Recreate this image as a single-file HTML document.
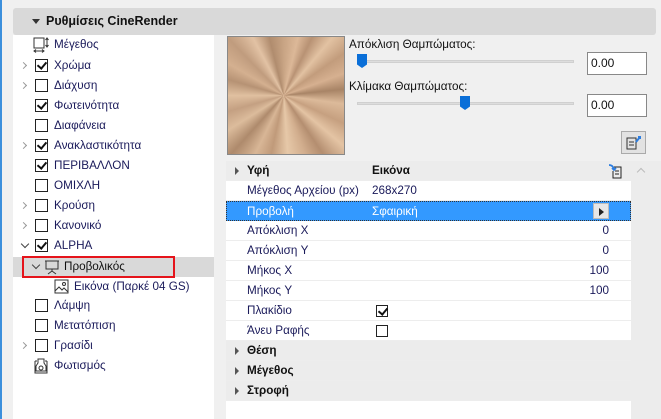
<!DOCTYPE html>
<html><head><meta charset="utf-8"><style>
*{box-sizing:border-box;margin:0;padding:0}
body{width:661px;height:419px;background:#f0f0f0;font-family:"Liberation Sans","DejaVu Sans",sans-serif;font-size:11.7px;color:#1a1a5a;position:relative;overflow:hidden}
.abs{position:absolute}
.hdr{left:13px;top:8px;width:643px;height:27px;background:#d9d9d9;border-radius:3px;font-weight:bold;color:#111;font-size:12.5px;line-height:27px;padding-left:33px}
.hdr:before{content:"";position:absolute;left:19px;top:11px;border-left:4px solid transparent;border-right:4px solid transparent;border-top:5px solid #333}
.left{left:13px;top:35px;width:201px;height:384px;background:#fff}
.row{position:absolute;left:0;width:201px;height:20px;line-height:20px}
.cb{position:absolute;left:22px;top:3px;width:13px;height:13px;border:1px solid #222;background:#fff}
.cb.on:after{content:"";position:absolute;left:3px;top:0px;width:4px;height:7px;border-right:2px solid #111;border-bottom:2px solid #111;transform:rotate(40deg)}
.lbl{position:absolute;left:41px}
.chev{position:absolute;left:8px;top:7px;width:5px;height:5px;border-right:1.3px solid #999;border-top:1.3px solid #999;transform:rotate(45deg)}
.chevd{position:absolute;left:9px;top:5px;width:6px;height:6px;border-right:1.5px solid #444;border-bottom:1.5px solid #444;transform:rotate(45deg)}
.tbl{left:226px;top:161px;width:405px;height:258px;background:#fff}
.tr{position:absolute;left:0;width:405px;height:20px;line-height:20px;border-bottom:1px solid #ededed}
.tr .k{position:absolute;left:21px}
.tr .v{position:absolute;left:146px}
.tr .n{position:absolute;right:22px}
.grp{background:#ececec;font-weight:bold;color:#111}
.grp:before{content:"";position:absolute;left:9px;top:6px;border-top:4px solid transparent;border-bottom:4px solid transparent;border-left:4px solid #555}
.inp{width:60px;height:23px;background:#fff;border:1px solid #888;padding-left:3px;line-height:21px;color:#111;font-size:12px}
.track{height:3px;background:#ddd;border:1px solid #d0d0d0}
.thumb{width:10px;height:14px;background:#0a6fd8;clip-path:polygon(0 0,100% 0,100% 75%,50% 100%,0 75%)}
.tcb{position:absolute;left:150px;top:4px;width:12px;height:12px;border:1px solid #222}
</style></head><body>
<div class="abs" style="left:0;top:0;width:2px;height:419px;background:#3c8fdc"></div>
<div class="abs hdr">Ρυθμίσεις CineRender</div>
<div class="abs left">
 <div class="row" style="top:0"><svg class="abs" style="left:20px;top:2px" width="16" height="16"><rect x="1" y="1" width="10" height="10" fill="none" stroke="#333"/><path d="M14 1v9M12.5 3l1.5-2 1.5 2M12.5 8l1.5 2 1.5-2M1 14h10M3 12.5l-2 1.5 2 1.5M9 12.5l2 1.5-2 1.5" stroke="#333" fill="none"/></svg><span class="lbl">Μέγεθος</span></div>
 <div class="row" style="top:21px"><i class="chev"></i><i class="cb on"></i><span class="lbl">Χρώμα</span></div>
 <div class="row" style="top:41px"><i class="chev"></i><i class="cb"></i><span class="lbl">Διάχυση</span></div>
 <div class="row" style="top:61px"><i class="cb on"></i><span class="lbl">Φωτεινότητα</span></div>
 <div class="row" style="top:81px"><i class="cb"></i><span class="lbl">Διαφάνεια</span></div>
 <div class="row" style="top:101px"><i class="chev"></i><i class="cb on"></i><span class="lbl">Ανακλαστικότητα</span></div>
 <div class="row" style="top:121px"><i class="cb on"></i><span class="lbl">ΠΕΡΙΒΑΛΛΟΝ</span></div>
 <div class="row" style="top:141px"><i class="cb"></i><span class="lbl">ΟΜΙΧΛΗ</span></div>
 <div class="row" style="top:161px"><i class="chev"></i><i class="cb"></i><span class="lbl">Κρούση</span></div>
 <div class="row" style="top:181px"><i class="chev"></i><i class="cb"></i><span class="lbl">Κανονικό</span></div>
 <div class="row" style="top:201px"><i class="chevd"></i><i class="cb on"></i><span class="lbl">ALPHA</span></div>
 <div class="row" style="top:222px;background:#d9d9d9;color:#111"><div class="abs" style="left:9px;top:-1px;width:153px;height:22px;border:2px solid #e5141b"></div><i class="chevd" style="left:20px"></i><svg class="abs" style="left:31px;top:2px" width="16" height="16"><rect x="2" y="2" width="12" height="8" fill="none" stroke="#333"/><path d="M1 2h14M8 10v2M8 12l-4 3M8 12l4 3" stroke="#333" fill="none"/></svg><span class="lbl" style="left:51px">Προβολικός</span></div>
 <div class="row" style="top:242px"><svg class="abs" style="left:41px;top:2px" width="15" height="15"><rect x="1" y="1" width="13" height="13" fill="none" stroke="#333"/><path d="M1 12l4-4 3 3 2-2 4 4" stroke="#333" fill="none"/><circle cx="10" cy="5" r="1.5" fill="none" stroke="#333"/></svg><span class="lbl" style="left:61px">Εικόνα (Παρκέ 04 GS)</span></div>
 <div class="row" style="top:261px"><i class="cb"></i><span class="lbl">Λάμψη</span></div>
 <div class="row" style="top:281px"><i class="cb"></i><span class="lbl">Μετατόπιση</span></div>
 <div class="row" style="top:301px"><i class="chev"></i><i class="cb"></i><span class="lbl">Γρασίδι</span></div>
 <div class="row" style="top:321px"><svg class="abs" style="left:21px;top:2px" width="14" height="16"><path d="M1 3h2M11 3h2M1 3v12h12V3M4 1h6v4l2 3v5H2V8l2-3z" stroke="#333" fill="none"/><circle cx="7" cy="10" r="2" fill="none" stroke="#333"/></svg><span class="lbl">Φωτισμός</span></div>
</div>
<div class="abs" style="left:227px;top:36px;width:118px;height:119px;border:1px solid #888;background:conic-gradient(from 0deg at 48% 50%,#c8a484 0deg,#dcb898 14deg,#b89274 26deg,#e2c2a2 40deg,#c29c7c 55deg,#d6b090 70deg,#a88466 84deg,#dcba9a 98deg,#c6a080 115deg,#e4c4a4 130deg,#b48e70 146deg,#d2ae8e 160deg,#e6c8a8 176deg,#c09a7a 192deg,#d8b696 206deg,#ae8a6c 222deg,#dcbc9c 238deg,#c4a082 254deg,#e0c0a0 270deg,#b69274 286deg,#d4b090 300deg,#c09c7e 316deg,#e2c2a4 332deg,#b08c6e 346deg,#c8a484 360deg)"></div>
<div class="abs" style="left:349px;top:38px;color:#111">Απόκλιση Θαμπώματος:</div>
<div class="abs track" style="left:357px;top:60px;width:217px"></div>
<div class="abs thumb" style="left:357px;top:54px"></div>
<div class="abs inp" style="left:587px;top:52px">0.00</div>
<div class="abs" style="left:349px;top:80px;color:#111">Κλίμακα Θαμπώματος:</div>
<div class="abs track" style="left:357px;top:102px;width:217px"></div>
<div class="abs thumb" style="left:460px;top:96px"></div>
<div class="abs inp" style="left:587px;top:94px">0.00</div>
<div class="abs" style="left:621px;top:131px;width:25px;height:23px;border:1px solid #aaa;background:#e2e2e2"><svg width="23" height="21"><path d="M5 6h9v11H5z M7 10h5M7 13h5" stroke="#333" fill="none"/><path d="M14 10l4-5M16 5h2v2" stroke="#2c7de0" stroke-width="2" fill="none"/></svg></div>
<div class="abs tbl">
 <div class="tr grp" style="top:0"><span class="k">Υφή</span><span class="v">Εικόνα</span><svg class="abs" style="left:382px;top:2px" width="16" height="16"><path d="M6 4h7v11H5V8M7 8h4M7 11h4" stroke="#222" fill="none"/><path d="M1 2c2 0 4 1 5 4M4 5l2 2 2-2" stroke="#2c7de0" stroke-width="1.8" fill="none"/></svg></div>
 <div class="tr" style="top:20px"><span class="k">Μέγεθος Αρχείου (px)</span><span class="v">268x270</span></div>
 <div class="tr" style="top:40px;background:#3399ff;color:#fff;border:1px dotted #333"><span class="k" style="left:20px">Προβολή</span><span class="v" style="left:145px">Σφαιρική</span><div class="abs" style="left:366px;top:1px;width:16px;height:16px;border:1px solid #bbb;background:#e6e6e6"><div style="margin:4px 0 0 5px;border-top:4px solid transparent;border-bottom:4px solid transparent;border-left:5px solid #222;width:0"></div></div></div>
 <div class="tr" style="top:60px"><span class="k">Απόκλιση X</span><span class="n">0</span></div>
 <div class="tr" style="top:80px"><span class="k">Απόκλιση Y</span><span class="n">0</span></div>
 <div class="tr" style="top:100px"><span class="k">Μήκος X</span><span class="n">100</span></div>
 <div class="tr" style="top:120px"><span class="k">Μήκος Y</span><span class="n">100</span></div>
 <div class="tr" style="top:140px"><span class="k">Πλακίδιο</span><i class="tcb cb on" style="left:150px"></i></div>
 <div class="tr" style="top:160px"><span class="k">Άνευ Ραφής</span><i class="tcb"></i></div>
 <div class="tr grp" style="top:180px"><span class="k">Θέση</span></div>
 <div class="tr grp" style="top:200px"><span class="k">Μέγεθος</span></div>
 <div class="tr grp" style="top:220px"><span class="k">Στροφή</span></div>
</div>
<div class="abs" style="left:631px;top:161px;width:30px;height:258px;background:#ececec"><div style="margin:8px 0 0 7px;width:6px;height:6px;border-left:1.5px solid #bbb;border-top:1.5px solid #bbb;transform:rotate(45deg)"></div></div>
</body></html>
